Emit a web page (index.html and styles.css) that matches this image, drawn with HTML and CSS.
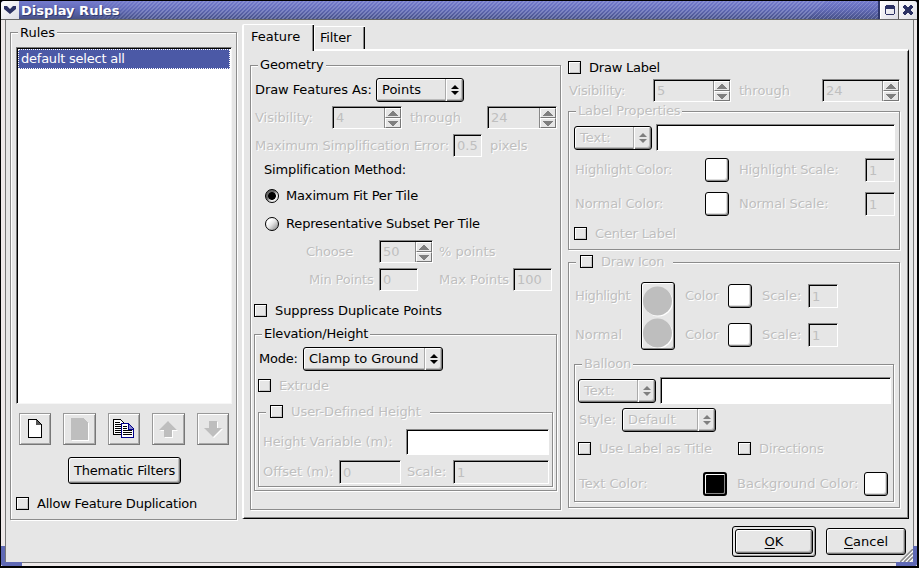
FILE: index.html
```
<!DOCTYPE html>
<html lang="en">
<head>
<meta charset="utf-8">
<title>Display Rules</title>
<link rel="stylesheet" href="styles.css">
</head>
<body>
<svg class="defs" width="0" height="0">
  <symbol id="updown" viewBox="0 0 8 12"><path d="M3.500 1h1v1h1v1h1v1h1v1h-7v-1h1v-1h1v-1h1zM.5 7h7v1h-1v1h-1v1h-1v1h-1v-1h-1v-1h-1v-1h-1z"/></symbol>
  <symbol id="up" viewBox="0 0 10 5"><path d="M4 0h2v1h1v1h1v1h1v1h1v1h-10v-1h1v-1h1v-1h1v-1h1z"/></symbol>
  <symbol id="down" viewBox="0 0 10 5"><path d="M0 0h10v1h-1v1h-1v1h-1v1h-1v1h-2v-1h-1v-1h-1v-1h-1v-1h-1z"/></symbol>
</svg>
<div class="window">
  <header class="titlebar">
    <div class="tb-btn"><svg width="12" height="8" viewBox="0 0 12 8"><path d="M0 0h3l3 3 3-3h3v3L6 8 0 3z" fill="#2b3163"/></svg></div>
    <h1>Display Rules</h1>
    <div class="tb-btn tb-max"><svg width="10" height="10" viewBox="0 0 10 10" shape-rendering="crispEdges"><path d="M1 0h8v1h1v8h-1v1h-8v-1h-1v-8h1zM1 4v5h8v-5z" fill="#2b3163" fill-rule="evenodd"/></svg></div>
    <div class="tb-btn tb-close"><svg width="10" height="10" viewBox="0 0 10 10" shape-rendering="crispEdges"><path d="M1 0h2v1h1v1h2v-1h1v-1h2v1h1v2h-1v1h-1v2h1v1h1v2h-1v1h-2v-1h-1v-1h-2v1h-1v1h-2v-1h-1v-2h1v-1h1v-2h-1v-1h-1v-2h1z" fill="#2b3163"/></svg></div>
  </header>
  <main class="client">
    <section class="group rules">
      <div class="legend">Rules</div>
      <div class="list"><div class="item t3">default select all</div></div>
      <div class="tools">
        <button class="tool"><svg width="16" height="20" viewBox="0 0 16 20" shape-rendering="crispEdges"><path d="M1.500 .5h8l5 5v13h-13z" fill="#fff" stroke="#000"/><path d="M9 1h1v1h1v1h1v1h1v1h1v1h-5z" fill="#555"/></svg></button>
        <button class="tool w33"><svg width="18" height="23" viewBox="0 0 18 23" shape-rendering="crispEdges"><path d="M1 1h12l5 5v17h-17z" fill="#fff"/><path d="M0 0h12l5 5v17h-17z" fill="#bebebe"/></svg></button>
        <button class="tool"><svg width="22" height="20" viewBox="0 0 22 20" shape-rendering="crispEdges"><path d="M.5 .5h7l4 4v11h-11z" fill="#fff" stroke="#000"/><path d="M2 3h5M2 5h6M2 7h6M2 9h6M2 11h6M2 13h6" stroke="#000" transform="translate(0 .5)"/><path d="M8.500 4.500h7l5 5v9h-12z" fill="#fff" stroke="#00008b"/><path d="M15 5v5h5" fill="#88c" stroke="#00008b"/><path d="M10 7h4M10 9h4M10 11h9M10 13h9M10 15h9" stroke="#000" transform="translate(0 .5)"/></svg></button>
        <button class="tool w33"><svg width="19" height="17" viewBox="0 0 19 17"><path d="M10 1l9 9h-5v7h-8v-7h-5z" fill="#fff"/><path d="M9 0l9 9h-5v7h-8v-7h-5z" fill="#bebebe"/></svg></button>
        <button class="tool"><svg width="19" height="17" viewBox="0 0 19 17"><path d="M10 17l9-9h-5v-7h-8v7h-5z" fill="#fff"/><path d="M9 16l9-9h-5v-7h-8v7h-5z" fill="#bebebe"/></svg></button>
      </div>
      <button class="btn thematic t2">Thematic Filters</button>
      <label class="check allow t3"><i class="box"></i><span>Allow Feature Duplication</span></label>
    </section>

    <section class="tabs">
      <nav class="tabbar"><div class="tab active">Feature</div><div class="tab t2">Filter</div></nav>
      <div class="page">
        <div class="group geometry">
          <div class="legend t2">Geometry</div>
          <div class="row draw-as"><span class="t1">Draw Features As:</span><div class="select"><span>Points</span><i><svg><use href="#updown"/></svg></i></div></div>
          <div class="row vis off"><span>Visibility:</span><div class="field spin">4<i><b><svg><use href="#up"/></svg></b><b><svg><use href="#down"/></svg></b></i></div><span>through</span><div class="field spin">24<i><b><svg><use href="#up"/></svg></b><b><svg><use href="#down"/></svg></b></i></div></div>
          <div class="row err off"><span class="t1">Maximum Simplification Error:</span><div class="field">0.5</div><span>pixels</span></div>
          <div class="row simp t2">Simplification Method:</div>
          <label class="row radio first t2"><i class="dot on"></i><span>Maximum Fit Per Tile</span></label>
          <label class="row radio t2"><i class="dot"></i><span>Representative Subset Per Tile</span></label>
          <div class="row choose off"><span class="t2">Choose</span><div class="field spin">50<i><b><svg><use href="#up"/></svg></b><b><svg><use href="#down"/></svg></b></i></div><span>% points</span></div>
          <div class="row minmax off"><span class="t2">Min Points</span><div class="field">0</div><span>Max Points</span><div class="field">100</div></div>
          <label class="check suppress t1"><i class="box"></i><span>Suppress Duplicate Points</span></label>
          <div class="group elevation">
            <div class="legend t3">Elevation/Height</div>
            <div class="row mode"><span class="t3">Mode:</span><div class="select"><span class="t1">Clamp to Ground</span><i><svg><use href="#updown"/></svg></i></div></div>
            <label class="check extrude off t2"><i class="box"></i><span>Extrude</span></label>
            <div class="group user off">
              <div class="legend check t1"><i class="box"></i><span>User-Defined Height</span></div>
              <div class="row hvar"><span class="t1">Height Variable (m):</span><div class="field white"></div></div>
              <div class="row offset"><span>Offset (m):</span><div class="field">0</div><span>Scale:</span><div class="field">1</div></div>
            </div>
          </div>
        </div>

        <div class="side">
          <label class="check t3"><i class="box"></i><span>Draw Label</span></label>
          <div class="row lvis off"><span class="t2">Visibility:</span><div class="field spin">5<i><b><svg><use href="#up"/></svg></b><b><svg><use href="#down"/></svg></b></i></div><span>through</span><div class="field spin">24<i><b><svg><use href="#up"/></svg></b><b><svg><use href="#down"/></svg></b></i></div></div>
          <div class="group props off">
            <div class="legend t2">Label Properties</div>
            <div class="row text"><div class="select"><span>Text:</span><i><svg><use href="#updown"/></svg></i></div><div class="field white"></div></div>
            <div class="row scale"><span class="t3">Highlight Color:</span><div class="swatch"></div><span class="t2">Highlight Scale:</span><div class="field">1</div></div>
            <div class="row scale second"><span class="t1">Normal Color:</span><div class="swatch"></div><span class="t1">Normal Scale:</span><div class="field">1</div></div>
            <label class="check center t2"><i class="box"></i><span>Center Label</span></label>
          </div>
          <div class="group icon off">
            <div class="legend check t3"><i class="box"></i><span>Draw Icon</span></div>
            <div class="icons">
              <span class="t4">Highlight</span>
              <div class="preview"><svg width="30" height="62" viewBox="0 0 30 62"><g fill="#fff"><circle cx="15.500" cy="16" r="14.500"/><circle cx="15.500" cy="48" r="14.500"/></g><g fill="#bebebe"><circle cx="14.500" cy="15" r="14.500"/><circle cx="14.500" cy="47" r="14.500"/></g></svg></div>
              <span class="t2">Color</span><div class="swatch"></div><span>Scale:</span><div class="field">1</div>
              <span>Normal</span><span class="t2">Color</span><div class="swatch"></div><span>Scale:</span><div class="field">1</div>
            </div>
            <div class="group balloon">
              <div class="legend t2">Balloon</div>
              <div class="row text"><div class="select"><span>Text:</span><i><svg><use href="#updown"/></svg></i></div><div class="field white"></div></div>
              <div class="row style"><span>Style:</span><div class="select"><span>Default</span><i><svg><use href="#updown"/></svg></i></div></div>
              <div class="row flags"><label class="check t1"><i class="box"></i><span>Use Label as Title</span></label><label class="check t1"><i class="box"></i><span>Directions</span></label></div>
              <div class="row colors"><span>Text Color:</span><div class="swatch black"></div><span class="wide">Background Color:</span><div class="swatch"></div></div>
            </div>
          </div>
        </div>
      </div>
    </section>

    <footer class="actions">
      <div class="default"><button class="btn"><u>O</u>K</button></div>
      <button class="btn cancel"><u>C</u>ancel</button>
    </footer>
  </main>
  <svg class="grip" width="13" height="13" viewBox="0 0 13 13"><path d="M0 13L13 0M4 13l9-9M8 13l5-5" stroke="#888" stroke-width="1.500"/><path d="M2 13L13 2M6 13l7-7M10 13l3-3" stroke="#fff"/></svg>
  <div class="corner left"></div>
  <div class="corner right"></div>
</div>
</body>
</html>
```
FILE: styles.css
```
* { box-sizing: border-box; }
body {
  margin: 0;
  width: 919px;
  height: 568px;
  overflow: hidden;
  background: #000;
  font: 13px/16px "DejaVu Sans", sans-serif;
  color: #000;
}
i { font-style: normal; }
b { font-weight: normal; }
span { white-space: nowrap; }
.defs { display: block; }

/* tracking steps, loosest to tightest */
.wide { letter-spacing: .1px; }
.t1 { letter-spacing: -.08px; }
.t2 { letter-spacing: -.16px; }
.t3 { letter-spacing: -.23px; }
.t4 { letter-spacing: -.4px; }

.window {
  position: relative;
  width: 918px;
  height: 567px;
  padding: 1px;
  background: #000;
}

/* title bar */
.titlebar {
  display: flex;
  height: 19px;
  border-bottom: 1px solid #666;
  border-radius: 3px 3px 0 0;
  background: linear-gradient(#747bce, #5f68b4 50%, #475186);
  overflow: hidden;
}
.titlebar h1 {
  position: relative;
  z-index: 0;
  flex: 1;
  margin: 0;
  padding-left: 2px;
  font: bold 13px/19px "DejaVu Sans", sans-serif;
  color: #fff;
  text-shadow: 1px 1px 0 #333b70;
}
.titlebar h1::before {
  content: "";
  position: absolute;
  z-index: -1;
  inset: 0 0 0 66px;
  background: repeating-linear-gradient(135deg, transparent 0 1.830px, rgba(165, 172, 220, .45) 1.830px 2.830px);
  -webkit-mask-image: linear-gradient(90deg, transparent, #000 60px);
  mask-image: linear-gradient(90deg, transparent, #000 60px);
}
.tb-btn {
  display: flex;
  align-items: center;
  justify-content: center;
  width: 18px;
  background: linear-gradient(135deg, #fff, #dcdce4);
}
.tb-max { border-left: 1px solid #fff; margin-left: 2px; box-shadow: -2px 0 0 #2f376b; }
.tb-close { margin-left: 1px; box-shadow: -1px 0 0 #555; }

/* client area and frame */
.client {
  display: grid;
  grid-template-columns: 227px 667px;
  grid-template-rows: 499px 1fr;
  column-gap: 5px;
  height: 546px;
  padding-left: 5px;
  border: solid #eee9e9;
  border-width: 0 3px 3px 4px;
  background: #e6e6e6;
  box-shadow: inset 1px 0 0 #777, inset -1px 0 0 #777, inset 0 -1px 0 #777;
}
.corner { position: absolute; bottom: 1px; width: 21px; height: 20px; border: solid #5f69b5; }
.corner.left { left: 1px; border-width: 0 0 4px 4px; border-radius: 0 0 0 3px; }
.corner.right { right: 1px; border-width: 0 4px 4px 0; border-radius: 0 0 3px 0; }
.grip { position: absolute; right: 5px; bottom: 5px; }

/* group boxes */
.group { border: 1px solid #8c8c8c; box-shadow: 1px 1px 0 #fff, inset 1px 1px 0 #fff; }
.legend {
  width: max-content;
  height: 16px;
  margin: -9px 0 0 7px;
  padding: 0 2px;
  background: #e6e6e6;
}
.legend.check { height: 15px; padding: 0 9px 0 4px; }
.off { color: #bfbfbf; text-shadow: 1px 1px 0 #fff; }
.check { display: flex; align-items: center; gap: 8px; height: 13px; }
.box {
  width: 13px;
  height: 13px;
  border: 1px solid #000;
  box-shadow: inset 1px 1px 0 #fff, inset -1px -1px 0 #c4c4c4;
}

/* rows share one grid, each names its own columns */
.row { display: grid; align-items: center; }

/* fields */
.field {
  display: flex;
  align-items: center;
  height: 23px;
  padding: 1px 0 0 3px;
  border: 1px solid #fff;
  border-top-color: #888;
  border-left-color: #888;
  box-shadow: inset 1px 1px 0 #000;
  text-shadow: none;
}
.field.white { background: #fff; }
.spin i { display: grid; grid-template-rows: 10px 10px; width: 16px; height: 20px; margin-left: auto; }
.spin b {
  display: flex;
  align-items: center;
  justify-content: center;
  border: 1px solid #fff;
  border-right-color: #777;
  border-bottom-color: #777;
  box-shadow: -1px 0 0 #888;
}
.spin svg { width: 10px; height: 5px; fill: #7f7f7f; }
.select {
  display: flex;
  justify-content: space-between;
  height: 24px;
  padding-left: 5px;
  border: 1px solid #000;
  border-radius: 3px;
  box-shadow: inset 1px 1px 0 #fff, inset -1px -1px 0 #777, inset -2px -2px 0 #bbb;
  line-height: 21px;
}
.select i {
  display: flex;
  align-items: center;
  justify-content: center;
  width: 18px;
  border-left: 1px solid #aaa;
  box-shadow: inset 1px 0 0 #fff;
}
.select svg { width: 8px; height: 12px; fill: #000; }
.off .select svg { fill: #7f7f7f; }
.swatch {
  width: 24px;
  height: 24px;
  border: 1px solid #000;
  border-radius: 3px;
  background: #fff;
  box-shadow: inset -1px -1px 0 #888, inset -2px -2px 0 #ddd;
}
.swatch.black { background: #000; border-width: 2px; box-shadow: inset 1px 1px 0 #fff, inset -1px -1px 0 #888; }
.btn {
  height: 27px;
  padding: 0;
  border: 1px solid #000;
  border-radius: 3px;
  background: #e6e6e6;
  box-shadow: inset 1px 1px 0 #fff, inset -1px -1px 0 #777, inset -2px -2px 0 #bbb;
  font-family: inherit;
  font-size: 13px;
  line-height: 16px;
  color: #000;
}
.btn u { text-underline-offset: 2px; }

/* rules panel */
.rules { height: 488px; margin-top: 12px; }
.rules > .legend { height: 17px; padding-top: 1px; }
.list {
  height: 357px;
  margin: 6px 4px 0 5px;
  padding: 1px 0 0;
  border: 1px solid #f6f6f6;
  border-top-color: #777;
  border-left-color: #777;
  background: #fff;
  box-shadow: inset 1px 1px 0 #000;
}
.item {
  height: 20px;
  margin: 0 1px;
  padding-left: 2px;
  border: 1px dotted #fff;
  background: #4b59a6;
  color: #fff;
  line-height: 17px;
}
.tools { display: flex; gap: 12px; margin: 9px 0 0 8px; }
.tool {
  display: flex;
  align-items: center;
  justify-content: center;
  width: 32px;
  height: 32px;
  padding: 0;
  border: 1px solid #777;
  border-top-color: #999;
  border-left-color: #999;
  background: #e6e6e6;
  box-shadow: inset 1px 1px 0 #fff, inset -1px -1px 0 #aaa;
}
.tool.w33 { width: 33px; }
.thematic { display: block; width: 113px; margin: 12px 0 0 57px; }
.allow { margin: 13px 0 0 5px; }

/* tabs */
.tabs { padding-top: 4px; }
.tabbar { display: flex; align-items: flex-end; height: 25px; }
.tab {
  height: 23px;
  padding: 3px 11px 0 5px;
  width: 51px;
  border: solid #fff;
  border-width: 1px 0 0 1px;
  border-radius: 2px 0 0 0;
  box-shadow: inset -1px 0 0 #000, inset -2px 0 0 #888;
}
.tab.active {
  position: relative;
  width: 72px;
  height: 27px;
  margin-bottom: -2px;
  padding: 4px 0 0 7px;
  border-width: 1px 0 0 2px;
  background: #e6e6e6;
}
.page {
  display: flex;
  height: 470px;
  padding: 14px 0 0 6px;
  border: 2px solid #fff;
  border-right: 1px solid #000;
  border-bottom: 1px solid #000;
  box-shadow: inset -1px -1px 0 #888;
}

/* geometry */
.geometry { width: 311px; height: 445px; }
.geometry > .row { margin-left: 4px; }
.draw-as { grid-template-columns: 121px 88px; height: 24px; margin-top: 5px; }
.vis { grid-template-columns: 77px 78px 77px 70px; height: 23px; margin-top: 4px; }
.vis .field { width: 70px; }
.err { grid-template-columns: 198px 29px 60px; height: 23px; margin-top: 5px; }
.err span:last-child { padding-left: 8px; }
.geometry > .simp { height: 16px; margin: 5px 0 0 13px; }
.geometry > .radio { grid-template-columns: 21px auto; justify-content: start; height: 14px; margin: 14px 0 0 14px; }
.geometry > .first { margin-top: 10px; }
.dot {
  width: 14px;
  height: 14px;
  border: 1px solid #000;
  border-radius: 50%;
  background: linear-gradient(135deg, #fff 25%, #e6e6e6 50%, #aaa 80%);
}
.dot.on { background: radial-gradient(circle, #000 3.500px, transparent 4.200px), linear-gradient(135deg, #666 40%, #eee 65%); }
.geometry > .choose { grid-template-columns: 73px 60px auto; height: 23px; margin: 10px 0 0 55px; }
.choose .field { width: 54px; }
.geometry > .minmax { grid-template-columns: 70px 60px 74px 39px; height: 23px; margin: 5px 0 0 58px; }
.minmax .field { width: 39px; }
.suppress { margin: 13px 0 0 3px; }
.elevation { width: 303px; height: 157px; margin: 17px 0 0 3px; }
.mode { grid-template-columns: 44px 140px; height: 24px; margin: 5px 0 0 4px; }
.extrude { margin: 8px 0 0 3px; }
.user { width: 295px; height: 75px; margin: 20px 0 0 3px; }
.hvar { grid-template-columns: 143px 143px; height: 26px; margin: 10px 0 0 4px; }
.hvar .field { height: 26px; }
.offset { grid-template-columns: 76px 68px 46px 96px; height: 24px; margin: 5px 0 0 4px; }
.offset .field { height: 24px; }
.offset .field:nth-child(2) { width: 62px; }

/* label and icon column */
.side { width: 332px; margin: -4px 0 0 7px; }
.lvis { grid-template-columns: 84px 86px 83px 78px; height: 23px; margin: 5px 0 0 1px; }
.lvis .field { width: 78px; }
.props { height: 139px; margin-top: 9px; }
.text { grid-template-columns: 78px 239px; column-gap: 4px; height: 27px; margin: 5px 0 0 5px; }
.text .field { height: 27px; }
.scale { grid-template-columns: 130px 34px 126px 30px; height: 24px; margin: 7px 0 0 6px; }
.scale .field, .icons .field { width: 30px; height: 24px; }
.scale.second { margin-top: 10px; }
.center { margin: 11px 0 0 5px; }
.icon { height: 246px; margin-top: 12px; }
.icons {
  display: grid;
  grid-template-columns: 66px 44px 43px 34px 46px 30px;
  grid-template-rows: 28px 30px;
  row-gap: 10px;
  align-items: center;
  margin: 13px 0 0 6px;
}
.preview {
  grid-row: span 2;
  width: 34px;
  height: 68px;
  padding: 3px 1px;
  border: 1px solid #000;
  border-radius: 3px;
  box-shadow: inset 1px 1px 0 #fff, inset -1px -1px 0 #888;
}
.balloon { width: 320px; height: 138px; margin: 14px 0 0 5px; }
.balloon .text { grid-template-columns: 78px 231px; margin-left: 3px; }
.style { grid-template-columns: 43px 94px; height: 24px; margin: 4px 0 0 4px; }
.flags { grid-template-columns: 160px auto; height: 13px; margin: 10px 0 0 3px; }
.colors { grid-template-columns: 124px 34px 127px 24px; height: 24px; margin: 17px 0 0 4px; }

/* dialog buttons */
.actions { grid-column: 1 / -1; display: flex; justify-content: flex-end; gap: 10px; padding: 7px 2px 0 0; margin-right: 1px; }
.default { width: 84px; height: 31px; padding: 2px; border: 1px solid #000; border-radius: 3px; box-shadow: inset -1px -1px 0 #999; }
.default .btn { display: block; width: 78px; height: 25px; }
.cancel { width: 80px; margin-top: 2px; }
```
